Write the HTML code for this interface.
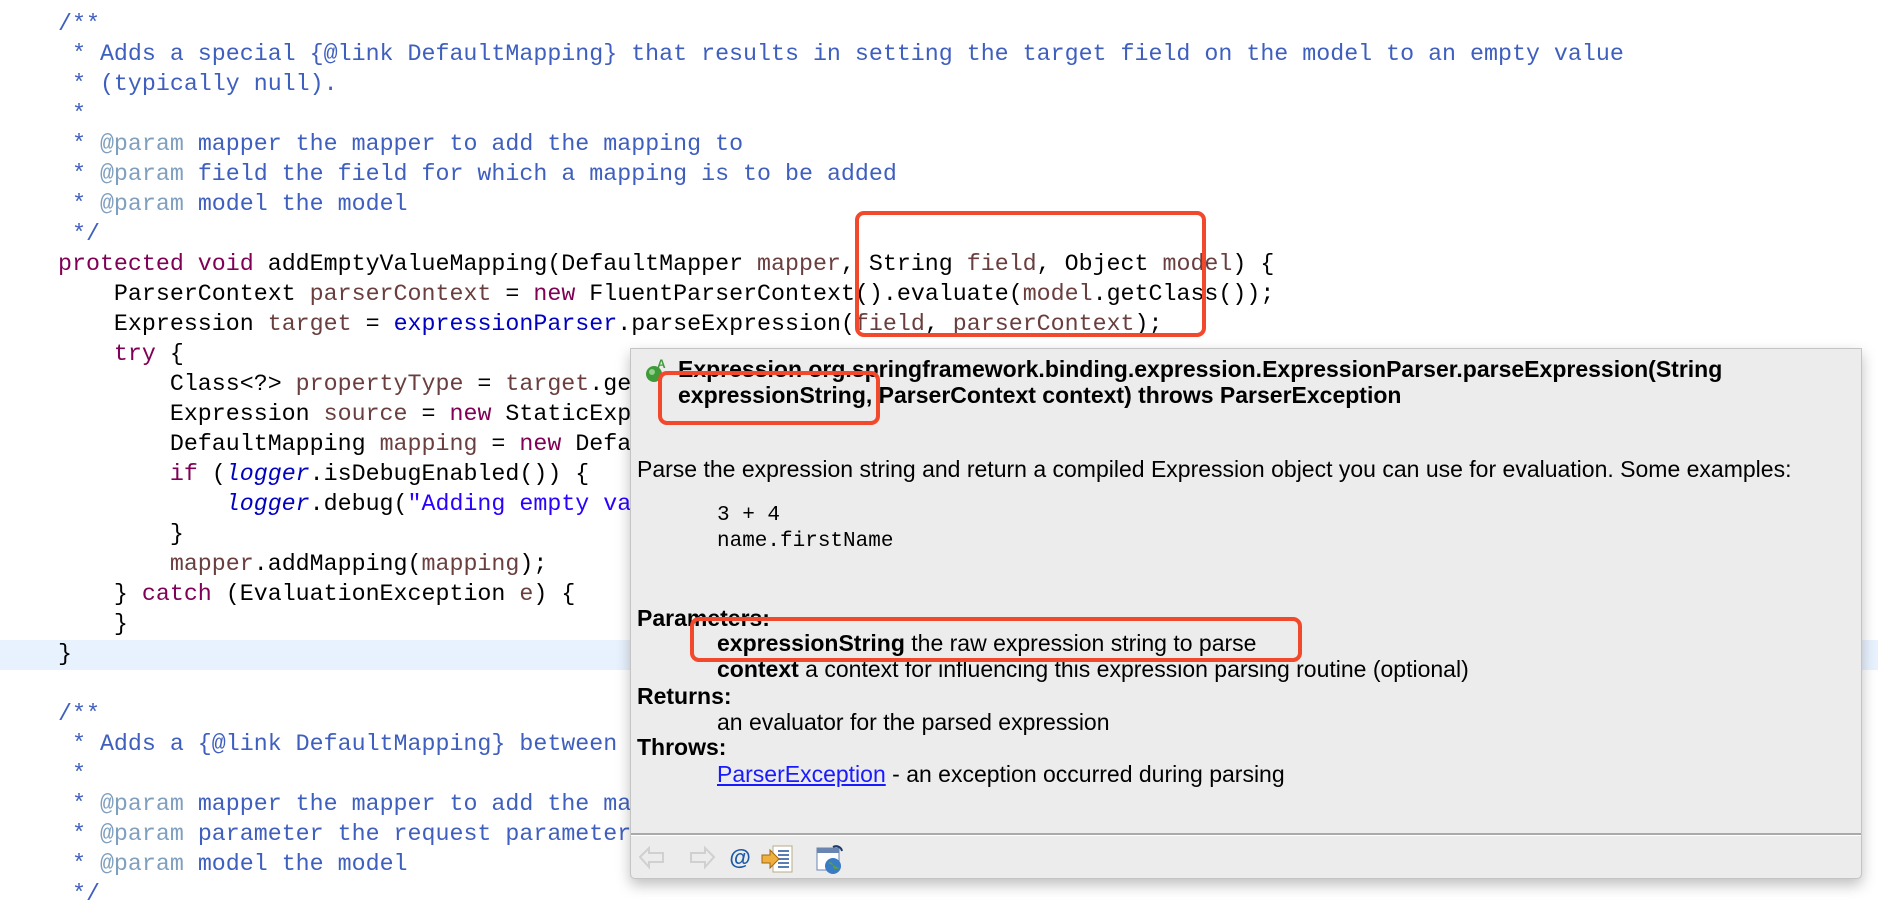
<!DOCTYPE html>
<html><head><meta charset="utf-8"><style>
html,body{margin:0;padding:0;width:1878px;height:898px;overflow:hidden;background:#fff;}
.code{position:absolute;left:0;top:0;width:1878px;font-family:"Liberation Mono",monospace;font-size:23.3px;color:#000;}
.ln{position:absolute;left:58px;height:30px;line-height:30px;white-space:pre;}
.c{color:#3f5fbf}.t{color:#7f9fbf}.k{color:#7f0055}.v{color:#6a3e3e}.f{color:#0000c0}.i{color:#0000c0;font-style:italic}.s{color:#2a00ff}
.hl{position:absolute;left:0;top:640px;width:1878px;height:30px;background:#e8f2fe;}
.pop{position:absolute;left:630px;top:348px;width:1230px;height:529px;background:#ececec;border:1px solid #c4c4c4;border-radius:0 0 5px 5px;box-shadow:0 6px 14px rgba(0,0,0,0.25);font-family:"Liberation Sans",sans-serif;color:#000;}
.p{position:absolute;white-space:pre;line-height:26px;font-size:23px;}
.b{font-weight:bold}
.m{font-family:"Liberation Mono",monospace;font-size:21px;}
.rb{position:absolute;border:4px solid #f2482c;border-radius:9px;box-sizing:border-box;}
</style></head><body>
<div class="hl"></div>
<div class="code">
<div class="ln c" style="top:9px">/**</div>
<div class="ln c" style="top:39px"> * Adds a special {@link DefaultMapping} that results in setting the target field on the model to an empty value</div>
<div class="ln c" style="top:69px"> * (typically null).</div>
<div class="ln c" style="top:99px"> *</div>
<div class="ln c" style="top:129px"> * <span class="t">@param</span> mapper the mapper to add the mapping to</div>
<div class="ln c" style="top:159px"> * <span class="t">@param</span> field the field for which a mapping is to be added</div>
<div class="ln c" style="top:189px"> * <span class="t">@param</span> model the model</div>
<div class="ln c" style="top:219px"> */</div>
<div class="ln" style="top:249px"><span class="k">protected void</span> addEmptyValueMapping(DefaultMapper <span class="v">mapper</span>, String <span class="v">field</span>, Object <span class="v">model</span>) {</div>
<div class="ln" style="top:279px">    ParserContext <span class="v">parserContext</span> = <span class="k">new</span> FluentParserContext().evaluate(<span class="v">model</span>.getClass());</div>
<div class="ln" style="top:309px">    Expression <span class="v">target</span> = <span class="f">expressionParser</span>.parseExpression(<span class="v">field</span>, <span class="v">parserContext</span>);</div>
<div class="ln" style="top:339px">    <span class="k">try</span> {</div>
<div class="ln" style="top:369px">        Class&lt;?&gt; <span class="v">propertyType</span> = <span class="v">target</span>.getValueType(model);</div>
<div class="ln" style="top:399px">        Expression <span class="v">source</span> = <span class="k">new</span> StaticExpression(null);</div>
<div class="ln" style="top:429px">        DefaultMapping <span class="v">mapping</span> = <span class="k">new</span> DefaultMapping(source, target);</div>
<div class="ln" style="top:459px">        <span class="k">if</span> (<span class="i">logger</span>.isDebugEnabled()) {</div>
<div class="ln" style="top:489px">            <span class="i">logger</span>.debug(<span class="s">"Adding empty value mapping"</span>);</div>
<div class="ln" style="top:519px">        }</div>
<div class="ln" style="top:549px">        <span class="v">mapper</span>.addMapping(<span class="v">mapping</span>);</div>
<div class="ln" style="top:579px">    } <span class="k">catch</span> (EvaluationException <span class="v">e</span>) {</div>
<div class="ln" style="top:609px">    }</div>
<div class="ln" style="top:639px">}</div>
<div class="ln c" style="top:699px">/**</div>
<div class="ln c" style="top:729px"> * Adds a {@link DefaultMapping} between the given request parameter</div>
<div class="ln c" style="top:759px"> *</div>
<div class="ln c" style="top:789px"> * <span class="t">@param</span> mapper the mapper to add the mapping to</div>
<div class="ln c" style="top:819px"> * <span class="t">@param</span> parameter the request parameter name</div>
<div class="ln c" style="top:849px"> * <span class="t">@param</span> model the model</div>
<div class="ln c" style="top:879px"> */</div>
</div>

<div class="rb" style="left:855px;top:211px;width:351px;height:126px;"></div>

<div class="pop">
  <svg style="position:absolute;left:13px;top:8px" width="26" height="28" viewBox="0 0 26 28">
    <circle cx="10" cy="17" r="8" fill="#3f9a3a"/><circle cx="8" cy="15" r="3" fill="#8fd08a"/>
    <text x="13" y="11" font-family="Liberation Sans" font-size="12" font-weight="bold" fill="#3f9a3a">A</text>
  </svg>
  <div class="p b" style="left:47px;top:7px;">Expression org.springframework.binding.expression.ExpressionParser.parseExpression(String</div>
  <div class="p b" style="left:47px;top:33px;">expressionString, ParserContext context) throws ParserException</div>
  <div class="p" style="left:6px;top:107px;">Parse the expression string and return a compiled Expression object you can use for evaluation. Some examples:</div>
  <div class="p m" style="left:86px;top:154px;">3 + 4</div>
  <div class="p m" style="left:86px;top:180px;">name.firstName</div>
  <div class="p b" style="left:6px;top:256px;">Parameters:</div>
  <div class="p" style="left:86px;top:281px;"><b>expressionString</b> the raw expression string to parse</div>
  <div class="p" style="left:86px;top:307px;"><b>context</b> a context for influencing this expression parsing routine (optional)</div>
  <div class="p b" style="left:6px;top:334px;">Returns:</div>
  <div class="p" style="left:86px;top:360px;">an evaluator for the parsed expression</div>
  <div class="p b" style="left:6px;top:385px;">Throws:</div>
  <div class="p" style="left:86px;top:412px;"><span style="color:#1a1aff;text-decoration:underline">ParserException</span> - an exception occurred during parsing</div>
  <div style="position:absolute;left:0;top:484px;width:1230px;height:2px;background:#a9a9a9;border-bottom:1px solid #fff;"></div>
  <svg style="position:absolute;left:6px;top:494px" width="220" height="32" viewBox="0 0 220 32">
    <path d="M3 14 L12 5 L12 10 L26 10 L26 19 L12 19 L12 24 Z" fill="none" stroke="#d0d0d0" stroke-width="2"/>
    <path d="M77 14 L68 5 L68 10 L54 10 L54 19 L68 19 L68 24 Z" fill="none" stroke="#d0d0d0" stroke-width="2"/>
    <text x="92" y="22" font-family="Liberation Sans" font-size="22" font-style="italic" font-weight="bold" fill="#1c5aa8">@</text>
    <rect x="136" y="3" width="19" height="26" fill="#fff" stroke="#b8ab88"/>
    <path d="M141 8h11M141 12h11M141 16h11M141 20h11M141 24h11" stroke="#5b7bb3" stroke-width="2"/>
    <path d="M125 12h8v-5l9 9-9 9v-5h-8z" fill="#f0b040" stroke="#a06a10"/>
    <rect x="180" y="5" width="22" height="22" fill="#fff" stroke="#6a86b0"/>
    <rect x="180" y="5" width="22" height="5" fill="#6a86b0"/>
    <circle cx="196" cy="23" r="8" fill="#3a7cc4"/><path d="M191 20c3-2 5 0 5 3s3 4 6 2" fill="#5aa040"/>
    <path d="M196 4 a6 6 0 0 1 9 4" fill="none" stroke="#1c3a6a" stroke-width="2"/>
  </svg>
</div>

<div class="rb" style="left:658px;top:371px;width:222px;height:54px;"></div>
<div class="rb" style="left:690px;top:617px;width:612px;height:45px;"></div>
</body></html>
